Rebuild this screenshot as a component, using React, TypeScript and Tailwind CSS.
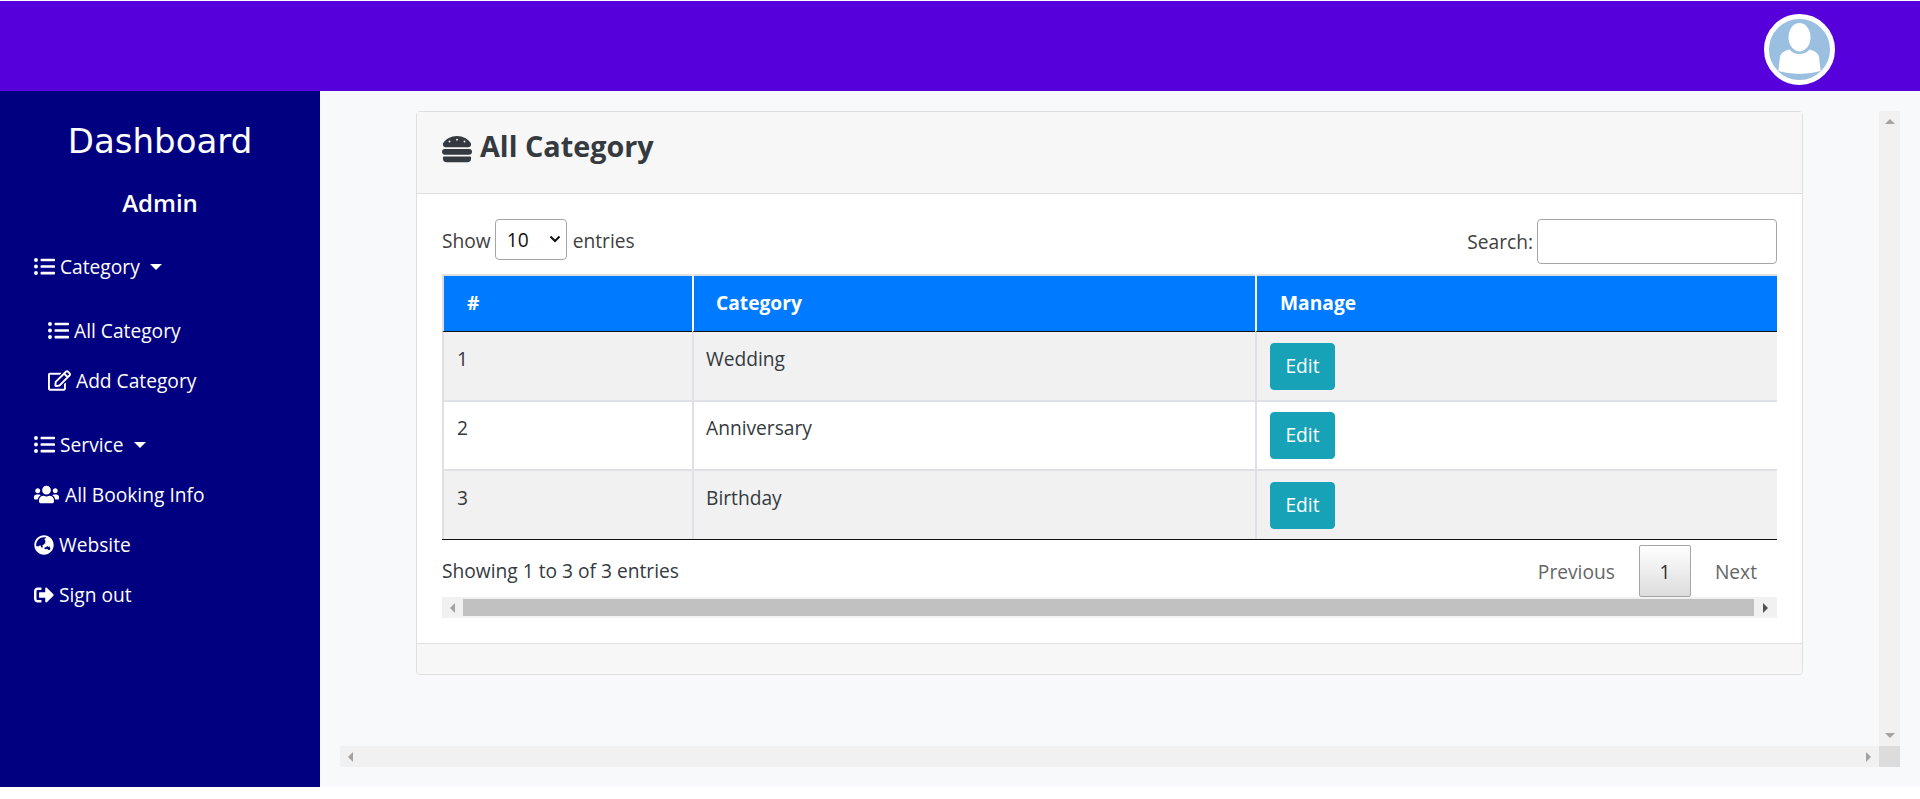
import { FaGlobeAsia, FaHamburger, FaListUl, FaRegEdit, FaSignOutAlt, FaUsers } from 'react-icons/fa';

const rows = [
  { id: 1, name: 'Wedding', height: 'h-[70px]' },
  { id: 2, name: 'Anniversary', height: 'h-[69px]' },
  { id: 3, name: 'Birthday', height: 'h-[68px]' },
];

function Caret() {
  return <span className="ml-[10px] inline-block h-0 w-0 border-x-[6px] border-t-[6px] border-x-transparent border-t-white" />;
}

function Sidebar() {
  return (
    <aside className="flex w-[320px] shrink-0 flex-col bg-[#000080] text-white">
      <h1 className="mt-[26px] text-center font-['Comic_Sans_MS','DejaVu_Sans',sans-serif] text-[34px] leading-[48px] font-normal">Dashboard</h1>
      <p className="mt-[23px] text-center text-[24px] leading-[29px] font-semibold">Admin</p>
      <nav className="mt-[35px] flex flex-col pl-[34px] text-[19.2px] leading-[29px]">
        <a className="flex h-[29px] items-center">
          <FaListUl className="mr-[5px] text-[21px]" />Category<Caret />
        </a>
        <div className="flex flex-col gap-[21px] py-[35px] pl-[14px]">
          <a className="flex h-[29px] items-center">
            <FaListUl className="mr-[5px] text-[21px]" />All Category
          </a>
          <a className="flex h-[29px] items-center">
            <FaRegEdit className="mr-[5px] text-[23px]" />Add Category
          </a>
        </div>
        <a className="flex h-[29px] items-center">
          <FaListUl className="mr-[5px] text-[21px]" />Service<Caret />
        </a>
        <a className="mt-[21px] flex h-[29px] items-center">
          <FaUsers className="mr-[6px] text-[25px]" />All Booking Info
        </a>
        <a className="mt-[21px] flex h-[29px] items-center">
          <FaGlobeAsia className="mr-[5px] text-[20px]" />Website
        </a>
        <a className="mt-[21px] flex h-[29px] items-center">
          <FaSignOutAlt className="mr-[5px] text-[20px]" />Sign out
        </a>
      </nav>
    </aside>
  );
}

function CategoryCard() {
  return (
    <section className="ml-[76px] flex h-[564px] w-[1387px] shrink-0 flex-col self-start rounded-[4px] border border-[#dfdfdf] bg-white">
      <header className="flex h-[82px] shrink-0 items-start border-b border-[#dfdfdf] bg-[#f7f7f7] pt-[14px] pl-[25px] text-[#343a40]">
        <FaHamburger className="mt-[8px] mr-[8px] text-[30px]" />
        <h2 className="text-[28.8px] leading-[40px] font-bold">All Category</h2>
      </header>

      <div className="flex-1 px-[25px] pt-[25px] text-[19.2px] text-[#343a40]">
        <div className="flex h-[55px] items-start justify-between text-[#404040]">
          <label className="flex h-[41px] items-center">
            <span className="pt-[3px]">Show</span>
            <span className="mr-[6px] ml-[4px] flex h-[41px] w-[72px] items-center justify-between rounded-[4px] border border-[#a6a6a6] pt-[2px] pr-[4px] pl-[11px] text-[#111]">
              10
              <svg width="12" height="8" viewBox="0 0 12 8" className="mt-[-4px] mr-[1px]">
                <path d="M1.5 1.5 6 6l4.5-4.5" fill="none" stroke="#111" strokeWidth="2" />
              </svg>
            </span>
            <span className="pt-[3px]">entries</span>
          </label>
          <label className="flex items-center">
            <span className="pt-[2px]">Search:</span>
            <input className="ml-[4px] h-[45px] w-[240px] rounded-[4px] border border-[#a6a6a6] bg-white" />
          </label>
        </div>

        <div className="border-b border-b-[#111]">
          <table className="w-[1335px] table-fixed border-separate border-spacing-0">
            <thead>
              <tr className="h-[58px] bg-[#007bff] text-left text-white">
                <th className="w-[250px] border-t-2 border-b border-l-2 border-t-[#e0e0e0] border-b-[#111] border-l-[#e0e0e0] pl-[23px] font-bold">#</th>
                <th className="w-[563px] border-t-2 border-b border-l-2 border-t-[#e0e0e0] border-b-[#111] border-l-white pl-[22px] font-bold">Category</th>
                <th className="border-t-2 border-b border-l-2 border-t-[#e0e0e0] border-b-[#111] border-l-white pl-[23px] font-bold">Manage</th>
              </tr>
            </thead>
            <tbody>
              {rows.map(row => {
                const bottom = row.id === 3 ? '' : 'border-b-2 border-b-[#dee2e6]';
                return (
                  <tr key={row.id} className={`${row.height} ${row.id === 2 ? 'bg-white' : 'bg-[#f1f1f1]'}`}>
                    <td className={`border-l-2 border-l-[#dee2e6] pb-[14px] pl-[13px] ${bottom}`}>{row.id}</td>
                    <td className={`border-l-2 border-l-[#dee2e6] pb-[14px] pl-[12px] ${bottom}`}>{row.name}</td>
                    <td className={`border-l-2 border-l-[#dee2e6] pl-[13px] ${bottom}`}>
                      <button className="h-[47px] w-[65px] rounded-[4px] border border-[#17a2b8] bg-[#17a2b8] text-white">Edit</button>
                    </td>
                  </tr>
                );
              })}
            </tbody>
          </table>
        </div>

        <div className="flex h-[57px] items-start justify-between">
          <p className="mt-[16px] leading-[29px]">Showing 1 to 3 of 3 entries</p>
          <div className="mt-[5px] flex items-center pr-[20px] text-[#666]">
            <span className="mr-[24px] pt-[3px]">Previous</span>
            <span className="flex h-[52px] w-[52px] items-center justify-center rounded-[2px] border border-[#a6a6a6] bg-gradient-to-b from-white to-[#dcdcdc] pt-[2px] text-[#333]">1</span>
            <span className="ml-[24px] pt-[3px]">Next</span>
          </div>
        </div>

        <div className="flex h-[21px] items-center bg-[#f1f1f1]">
          <span className="flex w-[21px] justify-center"><span className="h-0 w-0 border-y-[5px] border-r-[5px] border-y-transparent border-r-[#a3a3a3]" /></span>
          <span className="h-[17px] flex-1 bg-[#c1c1c1]" />
          <span className="flex w-[23px] justify-center"><span className="h-0 w-0 border-y-[5px] border-l-[5px] border-y-transparent border-l-[#505050]" /></span>
        </div>
      </div>

      <footer className="h-[31px] shrink-0 rounded-b-[4px] border-t border-[#dfdfdf] bg-[#f7f7f7]" />
    </section>
  );
}

export default function App() {
  return (
    <div className="flex h-[787px] flex-col pt-px font-['Open_Sans','Noto_Sans',sans-serif]">
      <header className="flex h-[90px] shrink-0 items-center justify-end bg-[#5600db] pt-[7px] pr-[85px]">
        <div className="flex h-[71px] w-[71px] items-center justify-center overflow-hidden rounded-full border-[5px] border-white bg-[#9bbfe0]">
          <svg viewBox="0 0 61 61" className="h-[61px] w-[61px]">
            <ellipse cx="30.5" cy="18.2" rx="11" ry="14.2" fill="#fff" />
            <path d="M20.500 30.500C23 33.500 26.500 35 30.500 35s7.500-1.500 10-4.500C46 32 49 34 50 38l1.700 14Q30.500 58 9.300 52L11 38c1-4 4-6 9.500-7.500Z" fill="#fff" />
          </svg>
        </div>
      </header>

      <div className="flex min-h-0 flex-1">
        <Sidebar />
        <main className="flex flex-1 bg-[#f8f9fa] pl-[20px]">
          <div className="mt-[20px] mb-[20px] flex w-[1560px] flex-col">
            <div className="flex min-h-0 flex-1">
              <div className="flex flex-1">
                <CategoryCard />
              </div>
              <div className="flex w-[21px] flex-col items-center justify-between bg-[#f1f1f1] py-[8px]">
                <span className="h-0 w-0 border-x-[5px] border-b-[5px] border-x-transparent border-b-[#a3a3a3]" />
                <span className="h-0 w-0 border-x-[5px] border-t-[5px] border-x-transparent border-t-[#a3a3a3]" />
              </div>
            </div>
            <div className="flex h-[21px] shrink-0 items-center justify-between bg-[#f1f1f1]">
              <span className="ml-[8px] h-0 w-0 border-y-[5px] border-r-[5px] border-y-transparent border-r-[#a3a3a3]" />
              <div className="flex h-full items-center">
                <span className="mr-[8px] h-0 w-0 border-y-[5px] border-l-[5px] border-y-transparent border-l-[#a3a3a3]" />
                <span className="h-full w-[21px] bg-[#dcdcdc]" />
              </div>
            </div>
          </div>
        </main>
      </div>
    </div>
  );
}
